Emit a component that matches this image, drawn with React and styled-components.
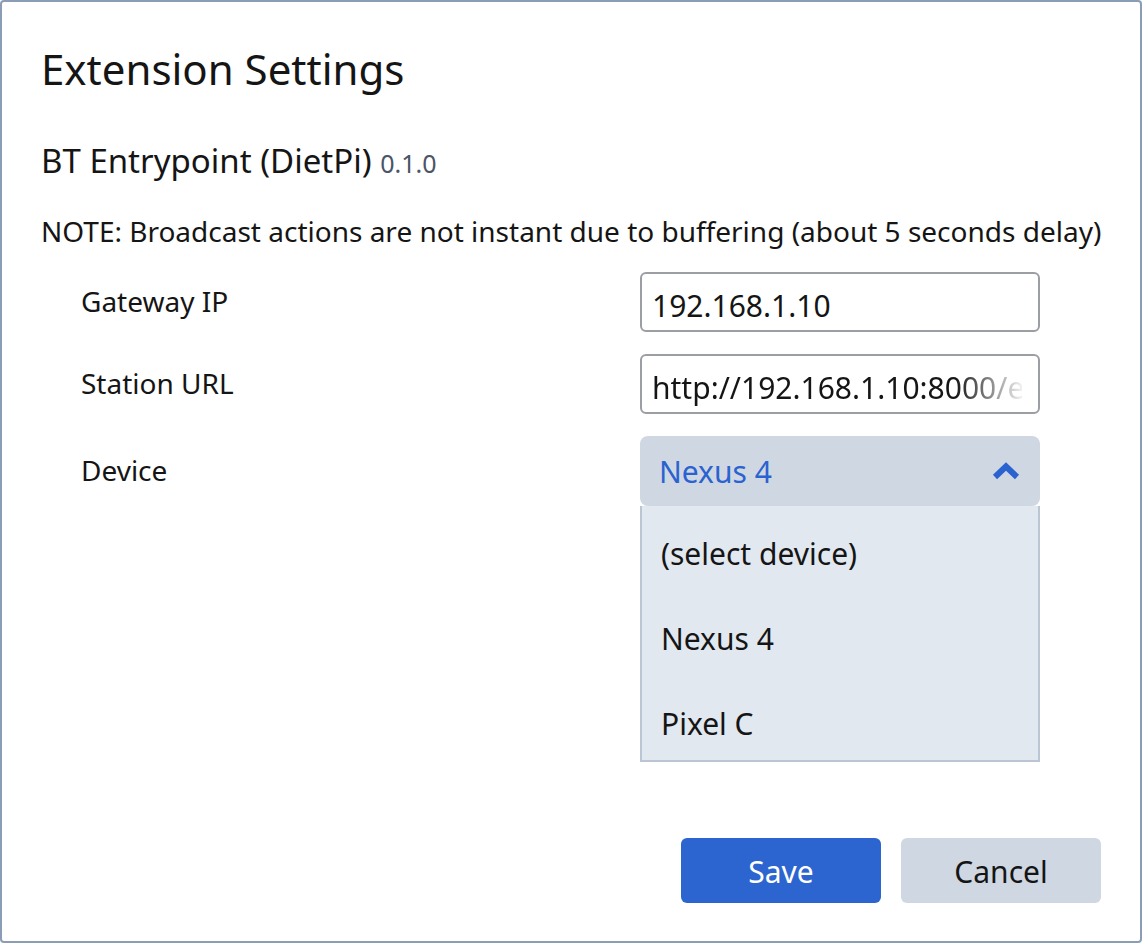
import React from 'react'
import styled, { createGlobalStyle } from 'styled-components'

const GlobalStyle = createGlobalStyle`
  html, body {
    margin: 0;
    padding: 0;
    height: 100%;
    background: #ffffff;
  }
  #root {
    height: 100%;
  }
  * {
    box-sizing: border-box;
  }
`

const Dialog = styled.div`
  display: flex;
  flex-direction: column;
  height: 100vh;
  width: 100vw;
  border: 2px solid #8b9db5;
  border-radius: 4px;
  padding: 38px 39px;
  background: #ffffff;
  font-family: 'Noto Sans', 'Open Sans', sans-serif;
  color: #151515;
`

const Title = styled.h1`
  margin: 0;
  font-size: 42px;
  font-weight: 400;
  line-height: normal;
`

const Heading = styled.h2`
  margin: 41px 0 0;
  font-size: 33px;
  font-weight: 400;
  line-height: normal;
`

const Version = styled.span`
  font-size: 25px;
  color: #4a5568;
`

const Note = styled.p`
  margin: 29px -10px 0 0;
  font-size: 28px;
  line-height: normal;
  white-space: nowrap;
`

const Form = styled.div`
  display: grid;
  grid-template-columns: 1fr 400px;
  grid-auto-rows: auto;
  row-gap: 22px;
  margin: 22px 61px 0 40px;
  align-items: center;
`

const Label = styled.label`
  font-size: 28px;
  margin-top: -3px;
`

const Field = styled.div`
  height: 60px;
  border: 2px solid #9b9ea3;
  border-radius: 6px;
  background: #ffffff;
  padding: 6px 16px 0 10px;
  display: flex;
  align-items: center;
  overflow: hidden;
`

const Input = styled.input`
  width: 100%;
  border: none;
  outline: none;
  padding: 0;
  background: transparent;
  font-family: inherit;
  font-size: 30px;
  color: #151515;
  ${(p) => p.$fade && `
    -webkit-mask-image: linear-gradient(to right, #000 82%, rgba(0,0,0,0.06) 100%);
    mask-image: linear-gradient(to right, #000 82%, rgba(0,0,0,0.06) 100%);
  `}
`

const SelectWrap = styled.div`
  position: relative;
`

const SelectButton = styled.div`
  height: 70px;
  border-radius: 8px;
  background: #cfd7e2;
  padding: 0 20px 0 19px;
  display: flex;
  align-items: center;
  justify-content: space-between;
  font-size: 30px;
  color: #2a62d0;
`

const Menu = styled.ul`
  position: absolute;
  top: 100%;
  left: 0;
  right: 0;
  height: 256px;
  margin: 0;
  padding: 5px 0 0;
  list-style: none;
  background: #e2e8f0;
  border: 2px solid #bac6d4;
  border-top: none;
  overflow: hidden;
`

const MenuItem = styled.li`
  height: 85px;
  display: flex;
  align-items: center;
  padding-left: 19px;
  font-size: 30px;
  color: #151515;
`

const Footer = styled.div`
  margin-top: auto;
  display: flex;
  justify-content: flex-end;
  gap: 20px;
`

const Button = styled.button`
  width: 200px;
  height: 65px;
  border: none;
  border-radius: 6px;
  font-family: inherit;
  font-size: 30px;
  padding-top: 2px;
  cursor: pointer;
  background: ${(p) => (p.$primary ? '#2c65cf' : '#cfd7e2')};
  color: ${(p) => (p.$primary ? '#ffffff' : '#151515')};
`

const Chevron = () => (
  <svg width="28" height="20" viewBox="0 0 28 20">
    <polyline
      points="3,16 14,5.5 25,16"
      fill="none"
      stroke="#2a62d0"
      strokeWidth="6"
      strokeLinejoin="miter"
    />
  </svg>
)

const App = () => {
  return (
    <>
      <GlobalStyle />
      <Dialog>
        <Title>Extension Settings</Title>
        <Heading>
          BT Entrypoint (DietPi) <Version>0.1.0</Version>
        </Heading>
        <Note>NOTE: Broadcast actions are not instant due to buffering (about 5 seconds delay)</Note>
        <Form>
          <Label>Gateway IP</Label>
          <Field>
            <Input defaultValue="192.168.1.10" />
          </Field>
          <Label>Station URL</Label>
          <Field>
            <Input $fade defaultValue="http://192.168.1.10:8000/extensions" />
          </Field>
          <Label>Device</Label>
          <SelectWrap>
            <SelectButton>
              <span>Nexus 4</span>
              <Chevron />
            </SelectButton>
            <Menu>
              <MenuItem>(select device)</MenuItem>
              <MenuItem>Nexus 4</MenuItem>
              <MenuItem>Pixel C</MenuItem>
            </Menu>
          </SelectWrap>
        </Form>
        <Footer>
          <Button $primary>Save</Button>
          <Button>Cancel</Button>
        </Footer>
      </Dialog>
    </>
  )
}

export default App
